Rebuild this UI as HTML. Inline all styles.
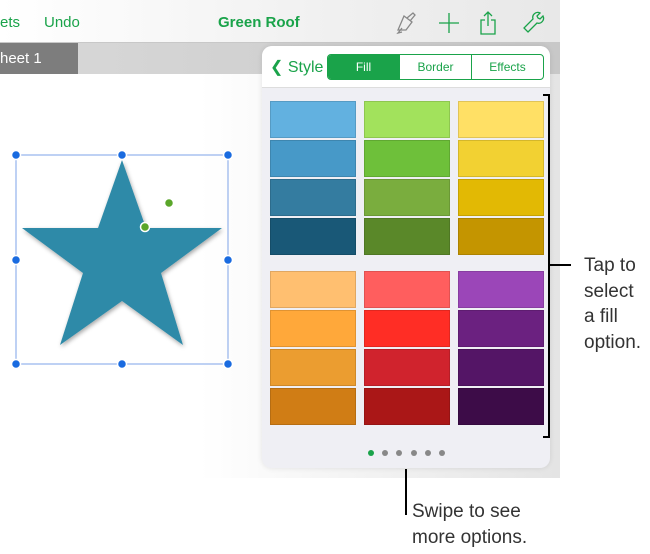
<!DOCTYPE html>
<html><head><style>
*{margin:0;padding:0;box-sizing:border-box}
body{width:650px;height:554px;background:#fff;position:relative;overflow:hidden;font-family:"Liberation Sans",sans-serif}
.abs{position:absolute}
.app{left:0;top:0;width:560px;height:478px;background:linear-gradient(90deg,#fff 0,#fff 200px,#e4e4e4 560px)}
.top{left:0;top:0;width:560px;height:43px;background:linear-gradient(90deg,#fff,#f0f0f0 60%,#e8e8e8);border-bottom:1px solid #c8c8c8}
.g{color:#1aa34a;font-size:15px}
.tabs{left:0;top:43px;width:560px;height:31px;background:linear-gradient(90deg,#d9d9d9,#c8c8c8)}
.pop{left:262px;top:46px;width:288px;height:422px;background:#efeff4;border-radius:10px;overflow:hidden;box-shadow:0 0 6px rgba(0,0,0,.1)}
.head{left:0;top:0;width:288px;height:42px;background:#fff;border-bottom:1px solid #ddd}
.seg{left:65px;top:8px;width:217px;height:26px;border:1px solid #1aa34a;border-radius:4px;display:flex;overflow:hidden}
.seg div{flex:1;text-align:center;line-height:24px;font-size:12px;color:#1aa34a;border-left:1px solid #1aa34a}
.seg div:first-child{background:#1aa34a;color:#fff;border:none}
.col{position:absolute;width:86px}
.col div{height:37px;margin-bottom:2px;border:1px solid rgba(0,0,0,.12)}
.note{font-size:19px;color:#333;line-height:25.5px}
</style></head><body>
<div class="abs app"></div>
<div class="abs top"></div>
<div class="abs g" style="left:0;top:14px">ets</div>
<div class="abs g" style="left:44px;top:14px">Undo</div>
<div class="abs g" style="left:218px;top:14px;font-weight:bold">Green Roof</div>
<svg class="abs" style="left:392px;top:10px" width="160" height="26" viewBox="0 0 160 26" fill="none" stroke-width="1.3">
<path d="M6 20 L12 6 L20 12 L14 20 Z M10 18 l-4 5 l4 -1 M15 8 l6 -5 l2 2 l-5 6" stroke="#888"/>
<path d="M57 3 v20 M47 13 h20" stroke="#1aa34a"/>
<path d="M93 10 h-4 v14 h14 v-14 h-4 M96 2 v14 M92 6 l4-4 l4 4" stroke="#1aa34a"/>
<path d="M136 22 l9-9 a5 5 0 0 0 6-7 l-3 3 l-2-1 l-1-2 l3-3 a5 5 0 0 0 -7 6 l-9 9 z" stroke="#1aa34a"/>
</svg>
<div class="abs tabs"></div>
<div class="abs" style="left:0;top:43px;width:78px;height:31px;background:#7d7d7d;color:#fff;font-size:15px;line-height:31px">heet 1</div>
<svg class="abs" style="left:0;top:140px" width="250" height="240">
<defs><filter id="s"><feDropShadow dx="1" dy="2" stdDeviation="2" flood-opacity=".35"/></filter></defs>
<rect x="16" y="15" width="212" height="209" fill="none" stroke="#7ea3e8" stroke-width="1"/>
<polygon points="122,20 146,88 222,88 161,133 183,205 122,161 60,205 83,133 22,88 98,88" fill="#2f8aa8" filter="url(#s)"/>
<g fill="#1a6be0" stroke="#fff" stroke-width="1.5">
<circle cx="16" cy="15" r="4.5"/><circle cx="122" cy="15" r="4.5"/><circle cx="228" cy="15" r="4.5"/>
<circle cx="16" cy="120" r="4.5"/><circle cx="228" cy="120" r="4.5"/>
<circle cx="16" cy="224" r="4.5"/><circle cx="122" cy="224" r="4.5"/><circle cx="228" cy="224" r="4.5"/>
</g>
<g fill="#5aa62a" stroke="#fff" stroke-width="1.5"><circle cx="145" cy="87" r="4.5"/><circle cx="169" cy="63" r="4.5"/></g>
</svg>
<div class="abs pop">
<div class="abs head"></div>
<div class="abs" style="left:8px;top:11px;color:#1aa34a;font-size:16px">❮ Style</div>
<div class="abs seg"><div>Fill</div><div>Border</div><div>Effects</div></div>
<div class="col" style="left:8px;top:55px"><div style="background:#62b1e0"></div><div style="background:#4799c8"></div><div style="background:#347ca0"></div><div style="background:#195877"></div></div>
<div class="col" style="left:102px;top:55px"><div style="background:#a2e25c"></div><div style="background:#6ec03a"></div><div style="background:#7aad3e"></div><div style="background:#5a8829"></div></div>
<div class="col" style="left:196px;top:55px"><div style="background:#ffe065"></div><div style="background:#f2d132"></div><div style="background:#e2b904"></div><div style="background:#c49500"></div></div>
<div class="col" style="left:8px;top:225px"><div style="background:#ffbf70"></div><div style="background:#ffa83a"></div><div style="background:#eb9d30"></div><div style="background:#d07d15"></div></div>
<div class="col" style="left:102px;top:225px"><div style="background:#ff5e5e"></div><div style="background:#ff2d25"></div><div style="background:#d0232d"></div><div style="background:#aa1717"></div></div>
<div class="col" style="left:196px;top:225px"><div style="background:#9b46b8"></div><div style="background:#6b2180"></div><div style="background:#541566"></div><div style="background:#3d0c48"></div></div>
<svg class="abs" style="left:100px;top:402px" width="90" height="10"><circle cx="9" cy="5" r="3" fill="#1aa34a"/><g fill="#888"><circle cx="23" cy="5" r="3"/><circle cx="37" cy="5" r="3"/><circle cx="52" cy="5" r="3"/><circle cx="66" cy="5" r="3"/><circle cx="80" cy="5" r="3"/></g></svg>
</div>
<svg class="abs" style="left:0;top:0" width="650" height="554" fill="none" stroke="#000" stroke-width="2">
<path d="M543 95 h6 v342 h-6 M549 265 h22"/>
<path d="M406 469 v46"/>
</svg>
<div class="abs note" style="left:584px;top:253px">Tap to<br>select<br>a fill<br>option.</div>
<div class="abs note" style="left:412px;top:499px">Swipe to see<br>more options.</div>
</body></html>
